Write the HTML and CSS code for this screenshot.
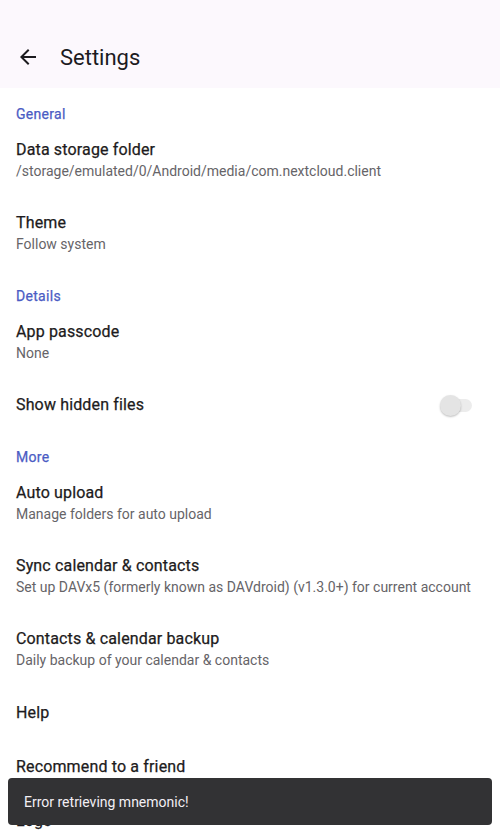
FILE: index.html
```html
<!DOCTYPE html>
<html>
<head>
  <meta charset="UTF-8">
  <title>Settings</title>
  <meta name="viewport" content="width=device-width, initial-scale=1.0">
  <link rel="stylesheet" href="styles.css">
</head>
<body>
  <div class="toolbar">
    <svg class="back" viewBox="0 0 24 24" width="24" height="24">
      <path d="M20 11H7.83l5.59-5.59L12 4l-8 8 8 8 1.41-1.41L7.83 13H20v-2z" fill="#1c1b1f"/>
    </svg>
    <span class="toolbar-title">Settings</span>
  </div>

  <div class="list">
    <div class="category">General</div>
    <div class="item">
      <div class="title">Data storage folder</div>
      <div class="summary">/storage/emulated/0/Android/media/com.nextcloud.client</div>
    </div>
    <div class="item">
      <div class="title">Theme</div>
      <div class="summary">Follow system</div>
    </div>

    <div class="category">Details</div>
    <div class="item">
      <div class="title">App passcode</div>
      <div class="summary">None</div>
    </div>
    <div class="item single switch-row">
      <div class="title">Show hidden files</div>
      <div class="switch"><div class="thumb"></div></div>
    </div>

    <div class="category">More</div>
    <div class="item">
      <div class="title">Auto upload</div>
      <div class="summary">Manage folders for auto upload</div>
    </div>
    <div class="item">
      <div class="title">Sync calendar &amp; contacts</div>
      <div class="summary">Set up DAVx5 (formerly known as DAVdroid) (v1.3.0+) for current account</div>
    </div>
    <div class="item">
      <div class="title">Contacts &amp; calendar backup</div>
      <div class="summary">Daily backup of your calendar &amp; contacts</div>
    </div>
    <div class="item single plain">
      <div class="title">Help</div>
    </div>
    <div class="item single plain">
      <div class="title">Recommend to a friend</div>
    </div>
    <div class="item single plain">
      <div class="title">Logs</div>
    </div>
  </div>

  <div class="snackbar">Error retrieving mnemonic!</div>
</body>
</html>
```

FILE: styles.css
```css
html, body {
  margin: 0;
  padding: 0;
  height: 833px;
  overflow: hidden;
}

body {
  background-color: #ffffff;
  font-family: Roboto, "Noto Sans", sans-serif;
  color: #1c1b1f;
  position: relative;
}

.toolbar {
  height: 88px;
  background-color: #fcf8fd;
  display: flex;
  align-items: center;
  padding: 28px 16px 0;
  box-sizing: border-box;
}

.back {
  display: block;
  margin-top: -2px;
}

.toolbar-title {
  font-size: 22px;
  margin-left: 20px;
  line-height: 28px;
}

.category {
  padding: 16px 16px 0;
  font-size: 14px;
  line-height: 20px;
  letter-spacing: 0.3px;
  color: #4b5cc4;
  -webkit-text-stroke: 0.25px #4b5cc4;
}

.item {
  padding: 14px 16px 17px;
}

.item.single {
  padding: 14px 16px;
}

.item.plain {
  padding: 15px 16px;
}

.title {
  font-size: 16px;
  line-height: 24px;
  letter-spacing: 0.15px;
  color: #1d1b20;
  -webkit-text-stroke: 0.25px #1d1b20;
}

.summary {
  font-size: 14px;
  line-height: 18px;
  color: #666468;
}

.switch-row {
  display: flex;
  align-items: center;
  justify-content: space-between;
}

.switch {
  position: relative;
  width: 30px;
  height: 13px;
  border-radius: 7px;
  background-color: #ececec;
  margin-right: 12px;
}

.thumb {
  position: absolute;
  left: -2px;
  top: -4px;
  width: 21px;
  height: 21px;
  border-radius: 50%;
  background-color: #e4e4e4;
  box-shadow: 0 1px 2px rgba(0, 0, 0, 0.25);
}

.snackbar {
  position: absolute;
  left: 8px;
  right: 8px;
  top: 778px;
  height: 47px;
  box-sizing: border-box;
  padding: 0 16px;
  display: flex;
  align-items: center;
  background-color: #323234;
  color: #f2eff4;
  font-size: 14px;
  border-radius: 4px;
}
```
